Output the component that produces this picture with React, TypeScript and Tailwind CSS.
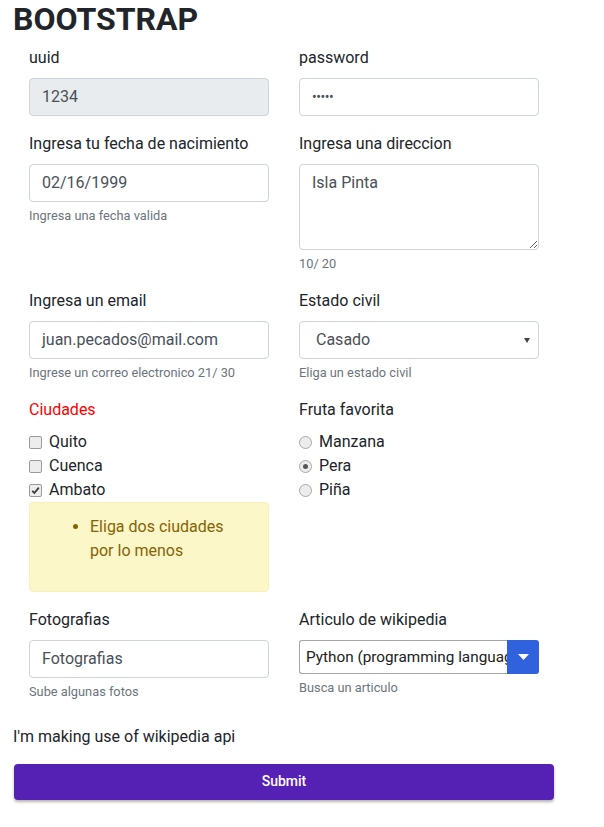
import React from "react";

const Label = ({ children, className = "" }: { children: React.ReactNode; className?: string }) => (
  <div className={`text-[16px] leading-[24px] mb-[8px] ${className}`}>{children}</div>
);

const Help = ({ children }: { children: React.ReactNode }) => (
  <div className="text-[12.8px] leading-[19.2px] text-[#6c757d] mt-[4px]">{children}</div>
);

const Box = ({ children, className = "" }: { children?: React.ReactNode; className?: string }) => (
  <div
    className={`h-[38px] w-full border border-[#ced4da] rounded-[4px] px-[12px] flex items-center text-[16px] text-[#495057] ${className}`}
  >
    {children}
  </div>
);

const Check = ({ checked, label }: { checked?: boolean; label: string }) => (
  <div className="flex items-center h-[24px]">
    <span className="w-[13px] h-[13px] rounded-[2px] border border-[#9a9a9a] bg-[#ededed] flex items-center justify-center">
      {checked && (
        <svg width="9" height="9" viewBox="0 0 9 9">
          <path d="M1.2 4.8 L3.4 7 L7.8 1.6" fill="none" stroke="#3a3a3a" strokeWidth="1.8" />
        </svg>
      )}
    </span>
    <span className="ml-[7px] text-[16px] leading-[24px]">{label}</span>
  </div>
);

const Radio = ({ checked, label }: { checked?: boolean; label: string }) => (
  <div className="flex items-center h-[24px]">
    <span className="w-[13px] h-[13px] rounded-full border border-[#a8a8a8] bg-[#ececec] flex items-center justify-center">
      {checked && <span className="w-[5px] h-[5px] rounded-full bg-[#555]" />}
    </span>
    <span className="ml-[7px] text-[16px] leading-[24px]">{label}</span>
  </div>
);

export default function App() {
  return (
    <div className="w-[604px] min-h-[827px] bg-white text-[#212529] font-['Roboto','Liberation_Sans',sans-serif]">
      <h1 className="text-[32px] font-bold leading-[38.4px] pl-[13px] mb-[7.6px]">BOOTSTRAP</h1>

      <div className="ml-[14px] w-[540px] grid grid-cols-[270px_270px] gap-y-[16px]">
        {/* Row 1 */}
        <div className="px-[15px]">
          <Label>uuid</Label>
          <Box className="bg-[#e9ecef]">1234</Box>
        </div>
        <div className="px-[15px]">
          <Label>password</Label>
          <Box>
            <span className="text-[14px] tracking-[-0.5px] text-[#495057]">•••••</span>
          </Box>
        </div>

        {/* Row 2 */}
        <div className="px-[15px]">
          <Label>Ingresa tu fecha de nacimiento</Label>
          <Box>02/16/1999</Box>
          <Help>Ingresa una fecha valida</Help>
        </div>
        <div className="px-[15px]">
          <Label>Ingresa una direccion</Label>
          <textarea
            readOnly
            defaultValue="Isla Pinta"
            className="block w-full h-[86px] border border-[#ced4da] rounded-[4px] px-[12px] py-[6px] text-[16px] leading-[24px] text-[#495057] outline-none"
          />
          <Help>10/ 20</Help>
        </div>

        {/* Row 3 */}
        <div className="px-[15px]">
          <Label>Ingresa un email</Label>
          <Box>juan.pecados@mail.com</Box>
          <Help>Ingrese un correo electronico 21/ 30</Help>
        </div>
        <div className="px-[15px]">
          <Label>Estado civil</Label>
          <Box className="justify-between pl-[16px] pr-[8px]">
            <span>Casado</span>
            <svg width="6" height="5" viewBox="0 0 6 5">
              <path d="M0 0 H6 L3 5 Z" fill="#444" />
            </svg>
          </Box>
          <Help>Eliga un estado civil</Help>
        </div>

        {/* Row 4 */}
        <div className="px-[15px]">
          <Label className="text-[#ff0000]">Ciudades</Label>
          <Check label="Quito" />
          <Check label="Cuenca" />
          <Check checked label="Ambato" />
          <div className="border border-[#f8f0b8] bg-[#fcf7c9] rounded-[4px] px-[20px] pt-[12px] pb-[12px] text-[#856404]">
            <ul className="list-disc pl-[40px] mb-[16px] text-[16px] leading-[24px]">
              <li>Eliga dos ciudades por lo menos</li>
            </ul>
          </div>
        </div>
        <div className="px-[15px]">
          <Label>Fruta favorita</Label>
          <Radio label="Manzana" />
          <Radio checked label="Pera" />
          <Radio label="Piña" />
        </div>

        {/* Row 5 */}
        <div className="px-[15px]">
          <Label>Fotografias</Label>
          <Box>Fotografias</Box>
          <Help>Sube algunas fotos</Help>
        </div>
        <div className="px-[15px]">
          <Label>Articulo de wikipedia</Label>
          <div className="flex h-[34px]">
            <div className="flex-1 min-w-0 border border-[#a6a6a6] border-r-0 rounded-l-[3px] pl-[6px] flex items-center overflow-hidden">
              <span className="whitespace-nowrap text-[15.3px] text-[#222]">Python (programming language)</span>
            </div>
            <div className="w-[32px] bg-[#2f62dc] rounded-r-[3px] flex items-center justify-center">
              <svg width="11" height="6" viewBox="0 0 11 6">
                <path d="M0 0 H11 L5.5 6 Z" fill="#fff" />
              </svg>
            </div>
          </div>
          <Help>Busca un articulo</Help>
        </div>
      </div>

      <p className="pl-[13px] mt-[23px] text-[16px] leading-[24px]">I'm making use of wikipedia api</p>

      <button className="ml-[14px] mt-[15px] w-[540px] h-[36px] bg-[#5521b5] text-white text-[14px] font-medium rounded-[4px] shadow-[0_2px_3px_rgba(0,0,0,0.3)]">
        Submit
      </button>
    </div>
  );
}
